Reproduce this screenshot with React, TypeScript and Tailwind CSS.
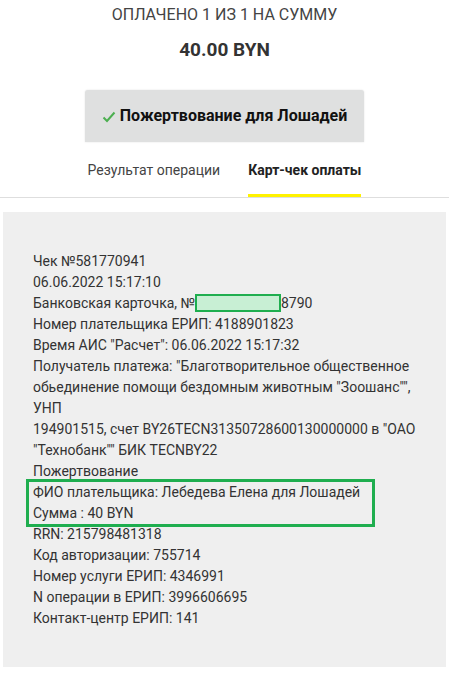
const lines1 = [
  "Чек №581770941",
  "06.06.2022 15:17:10",
];

const lines2 = [
  "Номер плательщика ЕРИП: 4188901823",
  'Время АИС "Расчет": 06.06.2022 15:17:32',
  'Получатель платежа: "Благотворительное общественное',
  'обьединение помощи бездомным животным "Зоошанс"",',
  "УНП",
  '194901515, счет BY26TECN31350728600130000000 в "ОАО',
  '"Технобанк"" БИК TECNBY22',
  "Пожертвование",
];

const lines3 = [
  "RRN: 215798481318",
  "Код авторизации: 755714",
  "Номер услуги ЕРИП: 4346991",
  "N операции в ЕРИП: 3996606695",
  "Контакт-центр ЕРИП: 141",
];

const App = () => {
  return (
    <main className="w-[449px] h-[673px] overflow-hidden bg-white font-['Roboto',sans-serif]">
      <p className="pt-[3px] text-center text-[16px] leading-6 text-[#444]">
        ОПЛАЧЕНО 1 ИЗ 1 НА СУММУ
      </p>
      <p className="mt-[11px] text-center text-[19px] leading-6 font-bold text-[#333]">
        40.00 BYN
      </p>

      {/* Service button */}
      <div className="mx-auto mt-[28px] w-[279px] h-[52px] bg-[#dfe0e0] rounded-t-[3px] shadow-[0_0_2px_rgba(0,0,0,0.12)] flex items-center justify-center gap-[4px]">
        <svg width="14" height="12" viewBox="0 0 14 12" className="mt-[1px]">
          <polyline
            points="1.5,6.5 5,10 12.5,1.5"
            fill="none"
            stroke="#4caf50"
            strokeWidth="2"
          />
        </svg>
        <span className="text-[16px] font-bold text-[#111] leading-6">
          Пожертвование для Лошадей
        </span>
      </div>

      {/* Tabs */}
      <div className="flex justify-center gap-[28px] border-b border-[#dedede]">
        <div className="pt-[18px] pb-[17px] text-[14px] leading-5 text-[#444]">
          Результат операции
        </div>
        <div className="pt-[18px] pb-[14px] border-b-[3px] border-[#fff200] text-[14px] leading-5 font-bold text-[#222]">
          Карт-чек оплаты
        </div>
      </div>

      {/* Receipt */}
      <section className="mx-[3px] mt-[14px] h-[455px] bg-[#efefef] pl-[30px] pt-[39px] text-[14px] leading-[21px] text-[#333]">
        {lines1.map((l) => (
          <p key={l}>{l}</p>
        ))}
        <p>
          Банковская карточка, №
          <span className="inline-block align-middle w-[86px] h-[18px] -mt-[3px] bg-[#c8efd4] border-2 border-[#1fae4f]"></span>
          8790
        </p>
        {lines2.map((l) => (
          <p key={l}>{l}</p>
        ))}
        <div className="-ml-[7px] pl-[4px] w-[349px] border-[3px] border-[#1fae4f] -mt-[3px] -mb-[3px]">
          <p>ФИО плательщика: Лебедева Елена для Лошадей</p>
          <p>Сумма : 40 BYN</p>
        </div>
        {lines3.map((l) => (
          <p key={l}>{l}</p>
        ))}
      </section>
    </main>
  );
};

export default App;
